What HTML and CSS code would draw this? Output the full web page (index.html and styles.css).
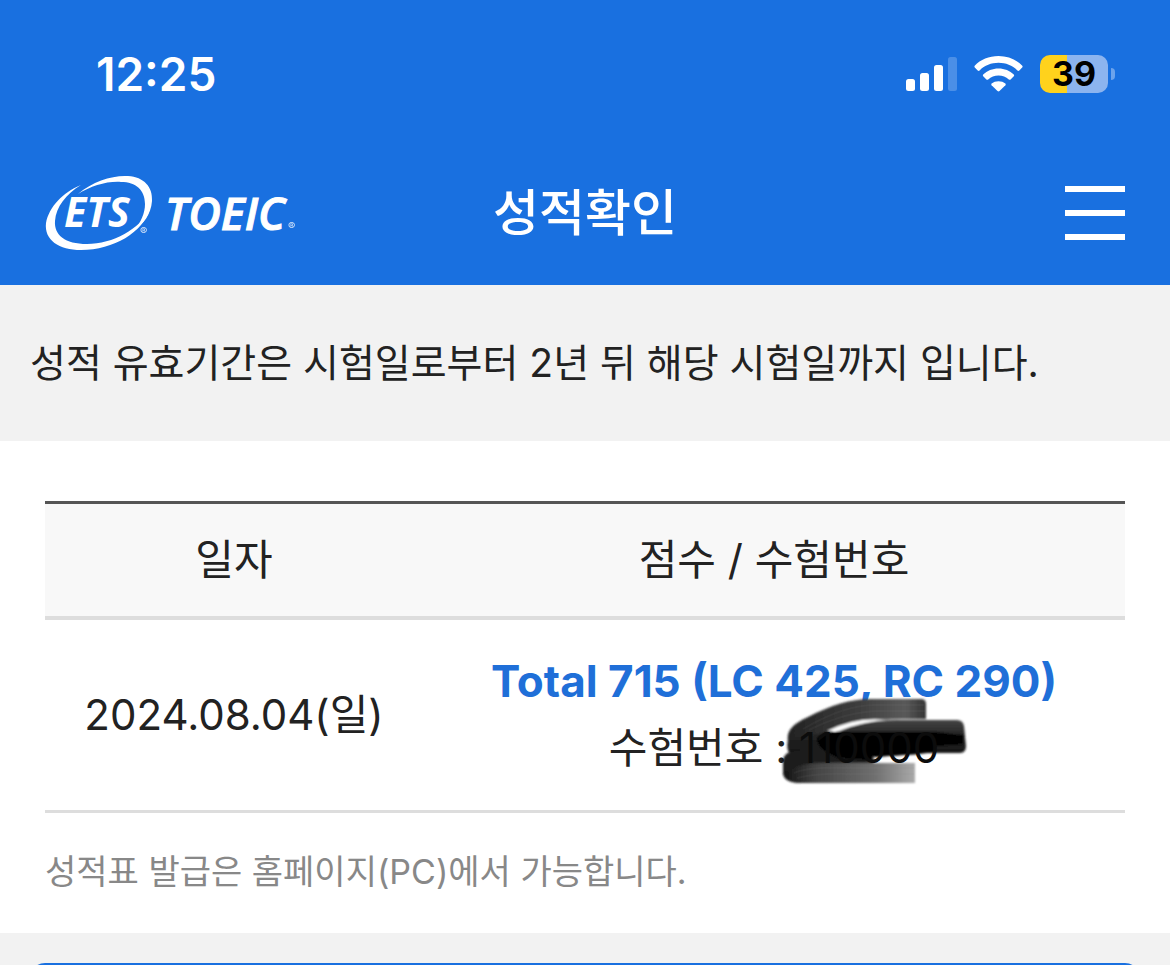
FILE: index.html
```
<!DOCTYPE html>
<html lang="ko">

<head>
  <meta charset="utf-8">
  <meta name="viewport" content="width=device-width, initial-scale=1.0">
  <link rel="stylesheet" href="styles.css">
  <title>성적확인</title>
</head>

<body>
  <div class="status-bar">
    <span class="clock">12:25</span>
    <div class="status-icons">
      <svg width="51" height="36" viewBox="0 0 51 36" fill="#fff">
        <rect x="0" y="23" width="9" height="12" rx="2.5"/>
        <rect x="14" y="17" width="9" height="18" rx="2.5"/>
        <rect x="28" y="9" width="9" height="26" rx="2.5"/>
        <rect x="42" y="1" width="9" height="34" rx="2.5" opacity=".22"/>
      </svg>
      <svg width="49" height="36" viewBox="0 0 49 36" fill="#fff">
        <path d="M24.500 0C34 0 42.500 3.600 48.300 9.700Q49 10.600 48.200 11.500L45.300 14.500Q44.300 15.300 43.400 14.400C38.300 9.500 31.800 6.800 24.500 6.800S10.700 9.500 5.600 14.400Q4.700 15.300 3.700 14.500L.800 11.500Q0 10.600 .700 9.700C6.500 3.600 15 0 24.500 0Z"/>
        <path d="M24.500 12.500C30.500 12.500 35.900 14.800 39.800 18.600Q40.600 19.500 39.800 20.300L36.600 23.500Q35.700 24.200 34.800 23.400C32 20.900 28.500 19.500 24.500 19.500S17 20.900 14.200 23.400Q13.300 24.200 12.400 23.500L9.200 20.300Q8.400 19.500 9.200 18.600C13.100 14.800 18.500 12.500 24.500 12.500Z"/>
        <path d="M24.500 25.200Q28.600 25.200 31.400 27.600Q32.200 28.400 31.400 29.200L25.500 35Q24.500 35.800 23.500 35L17.600 29.200Q16.800 28.400 17.600 27.600Q20.400 25.200 24.500 25.200Z"/>
      </svg>
      <div class="battery"><span>39</span></div>
    </div>
  </div>

  <header class="header">
    <a class="logo" href="#" aria-label="ETS TOEIC">
      <svg width="250" height="76" viewBox="0 0 250 76" fill="#fff">
        <path d="M36 10C18 17 4 32 1 48C-1 65 14 75 36 75C69 75 98 57 105 34C95 54 68 69 42 69C20 69 9 60 10 46C11 32 21 19 36 10Z"/>
        <path d="M33 19C48 6 68 0 83 1C99 2 108 12 107 26C106 40 98 49 89 56C96 47 100 38 100 29C100 15 91 7 76 7C62 6 46 11 33 19Z"/>
        <text class="logo-ets" x="19" y="52">ETS</text>
        <text class="logo-toeic" x="120" y="55">TOEIC</text>
        <text class="logo-mark" x="95" y="60">®</text>
        <text class="logo-mark" x="243" y="55">®</text>
      </svg>
    </a>
    <h1>성적확인</h1>
    <button class="menu" type="button" aria-label="메뉴"><i></i><i></i><i></i></button>
  </header>

  <p class="notice">성적 유효기간은 시험일로부터 2년 뒤 해당 시험일까지 입니다.</p>

  <main>
    <table>
      <thead>
        <tr>
          <th class="date">일자</th>
          <th>점수 / 수험번호</th>
        </tr>
      </thead>
      <tbody>
        <tr>
          <td>2024.08.04(일)</td>
          <td>
            <strong>Total 715 (LC 425, RC 290)</strong><br>
            수험번호 : <span class="number">110000
              <svg class="scribble" width="190" height="92" viewBox="0 0 190 92">
                <defs>
                  <linearGradient id="top" x1="0" x2="1">
                    <stop offset="0" stop-color="#222"/>
                    <stop offset=".5" stop-color="#3c3c3c"/>
                    <stop offset=".85" stop-color="#5a5a5a"/>
                    <stop offset="1" stop-color="#333"/>
                  </linearGradient>
                  <linearGradient id="bottom" x1="0" x2="1">
                    <stop offset="0" stop-color="#111"/>
                    <stop offset=".25" stop-color="#444"/>
                    <stop offset=".7" stop-color="#707070"/>
                    <stop offset="1" stop-color="#aaa"/>
                  </linearGradient>
                  <linearGradient id="middle" x1="0" x2="0" y1="0" y2="1">
                    <stop offset="0" stop-color="#444"/>
                    <stop offset=".4" stop-color="#222"/>
                    <stop offset="1" stop-color="#111"/>
                  </linearGradient>
                  <filter id="soft"><feGaussianBlur stdDeviation=".8"/></filter>
                </defs>
                <g filter="url(#soft)">
                  <path fill="url(#top)" d="M9 46C7 34 14 28 29 21C52 9 72 3 91 3H142Q147 3 147 8V23H122C94 23 70 29 50 37L12 56Z"/>
                  <path fill="url(#middle)" d="M9 44C19 40 40 37 56 36C78 27 98 24 117 24H178Q184 24 185 30L187 50Q187 57 181 57H145L92 61L45 66L14 61Q6 55 9 44Z"/>
                  <path fill="#fff" d="M48 35Q78 20 108 24Q84 25 60 35Z"/>
                  <path fill="url(#bottom)" d="M4 64Q6 55 15 56L95 59V67H136V87H25Q6 88 4 78Z"/>
                  <path fill="#1c1c1c" d="M12 56L48 50L140 56V58L94 61V67H48Q22 66 11 74L5 76Q3 58 12 56Z"/>
                  <path fill="#000" d="M38 42Q42 36 50 36H157L184 39V48L157 50V56L140 58L94 61V64L60 62Q38 54 38 42Z"/>
                </g>
                <g fill="none" stroke="#888" stroke-opacity=".08" stroke-width="2">
                  <path d="M24 33Q65 9 96 9H145M30 34Q70 14 105 15H146"/>
                  <path d="M15 77Q29 71 65 72H135M18 82Q40 77 70 78H135"/>
                </g>
              </svg>
            </span>
          </td>
        </tr>
      </tbody>
    </table>
    <p class="desc">성적표 발급은 홈페이지(PC)에서 가능합니다.</p>
  </main>

  <footer>
    <button class="more" type="button" aria-label="확인"></button>
  </footer>
</body>

</html>
```
FILE: styles.css
```
* {
  box-sizing: border-box;
}
body {
  display: flex;
  flex-direction: column;
  height: 100vh;
  margin: 0;
  overflow: hidden;
  background: #fff;
  color: #222;
  font-family: Inter, "Noto Sans CJK KR", sans-serif;
  font-size: 42px;
  line-height: 66px;
}
button {
  padding: 0;
  border: 0;
}
.status-bar, .header {
  display: flex;
  flex: none;
  align-items: center;
  justify-content: space-between;
  background: #1970e0;
  color: #fff;
}
.status-bar {
  height: 148px;
  padding: 0 55px 0 96px;
}
.clock {
  font-size: 46px;
  font-weight: 600;
}
.status-icons {
  display: flex;
  align-items: center;
  gap: 17px;
}
.battery {
  position: relative;
  width: 68px;
  height: 38px;
  margin-right: 7px;
  border-radius: 10px;
  background: linear-gradient(90deg, #ffd21c 40%, #8cb4ef 40%);
  color: #000;
  font-size: 34px;
  font-weight: 700;
  line-height: 38px;
  text-align: center;
}
.battery::after {
  content: "";
  position: absolute;
  top: 13px;
  right: -7px;
  width: 4px;
  height: 12px;
  border-radius: 0 4px 4px 0;
  background: #6ca3ec;
}

.header {
  height: 137px;
  padding: 0 45px 8px;
}
.header > * {
  flex: 1;
}
.logo svg {
  display: block;
  overflow: visible;
}
.logo-ets, .logo-toeic {
  font-family: "Open Sans", sans-serif;
  font-style: italic;
}
.logo-ets {
  font-size: 41px;
  font-weight: 700;
}
.logo-toeic {
  font-size: 45px;
  font-weight: 600;
  stroke: #fff;
  stroke-width: 1px;
}
.logo-mark {
  font-size: 11px;
  opacity: .8;
}
h1 {
  margin: 0;
  font-size: 50px;
  font-weight: 500;
  text-align: center;
}
.menu {
  display: flex;
  flex-direction: column;
  align-items: flex-end;
  gap: 18px;
  background: none;
}
.menu i {
  width: 60px;
  height: 6px;
  background: #fff;
}

.notice {
  flex: none;
  margin: 0;
  padding: 45px 30px;
  background: #f2f2f2;
  font-size: 39px;
}

main {
  flex: none;
  padding: 60px 45px 28px;
}
table {
  width: 100%;
  border-collapse: separate;
  border-spacing: 0;
  border-top: 3px solid #555;
  text-align: center;
}
th {
  padding: 23px 0;
  border-bottom: 4px solid #ddd;
  background: #f8f8f8;
  font-weight: 400;
}
td {
  padding: 29px 0;
  border-bottom: 3px solid #ddd;
}
.date {
  width: 35%;
}
strong {
  color: #1f6fd8;
  font-size: 44px;
  line-height: 1;
}
/* keeps the scribble behind the digits */
.number {
  position: relative;
  z-index: 0;
  color: #0c0c0c;
}
.scribble {
  position: absolute;
  z-index: -1;
  top: -26px;
  left: -20px;
}
.desc {
  margin: 26px 0 0;
  color: #888;
  font-size: 34px;
}

footer {
  flex: 1;
  min-height: 0;
  padding: 30px 30px 0;
  overflow: hidden;
  background: #f2f2f2;
}
.more {
  display: block;
  width: 100%;
  height: 135px;
  border-radius: 15px;
  background: #1970e0;
}
```
